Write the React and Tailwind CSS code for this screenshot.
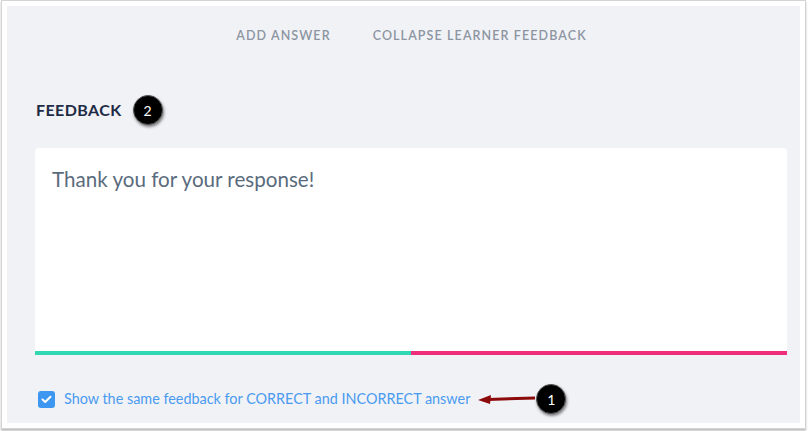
import React from "react";

export default function App() {
  return (
    <div className="w-[808px] h-[431px] bg-white relative" style={{ fontFamily: "Lato, 'Open Sans', sans-serif" }}>
      <div className="absolute left-[1px] top-0 w-[805px] h-[429px] border border-[#d4d4d4] shadow-[0_2px_2px_rgba(0,0,0,0.25)] bg-white p-[5px]">
        <div className="w-full h-full bg-[#f1f2f6] flex flex-col pl-[28px] pr-[14px]">
          <div className="h-[56px] flex items-end justify-center gap-[42px] pb-[16px] pl-[2px] text-[12.5px] font-semibold tracking-[1.1px] text-[#8c95a1]">
            <span>ADD ANSWER</span>
            <span>COLLAPSE LEARNER FEEDBACK</span>
          </div>
          <div className="h-[86px] flex items-center pb-[4px]">
            <span className="ml-[1px] text-[16px] font-bold text-[#1e2b45] tracking-[0.4px] mt-[14px]">FEEDBACK</span>
            <span className="ml-[11px] mt-[14px] w-[30px] h-[30px] rounded-full bg-black text-white text-[14px] flex items-center justify-center shadow-[1px_2px_3px_rgba(0,0,0,0.5)] border border-[#555]">2</span>
          </div>
          <div className="w-[752px] bg-white rounded-t-[4px] flex flex-col">
            <div className="h-[203px] px-[17px] pt-[16px] text-[20.6px] text-[#5a6b7d]">Thank you for your response!</div>
            <div className="flex h-[4px]">
              <div className="w-[376px] bg-[#2fd8b2]" />
              <div className="flex-1 bg-[#ee2e7c]" />
            </div>
          </div>
          <div className="flex items-center mt-[29px] relative">
            <span className="ml-[3px] w-[17px] h-[17px] rounded-[3px] bg-[#3d97f0] flex items-center justify-center">
              <svg width="11" height="9" viewBox="0 0 11 9"><path d="M1.5 4.5 L4.2 7 L9.5 1.8" stroke="white" strokeWidth="2" fill="none" strokeLinecap="round" strokeLinejoin="round" /></svg>
            </span>
            <span className="ml-[9px] text-[14.4px] text-[#4a9bf0]">Show the same feedback for CORRECT and INCORRECT answer</span>
            <svg className="ml-[8px]" width="58" height="14" viewBox="0 0 58 14">
              <path d="M10 7.5 L57 6" stroke="#8b0a0a" strokeWidth="3" />
              <path d="M0 8 L13 3 L12 12 Z" fill="#8b0a0a" />
            </svg>
            <span className="w-[30px] h-[30px] rounded-full bg-black text-white text-[14px] flex items-center justify-center shadow-[1px_2px_3px_rgba(0,0,0,0.5)] border border-[#555]">1</span>
          </div>
        </div>
      </div>
    </div>
  );
}
